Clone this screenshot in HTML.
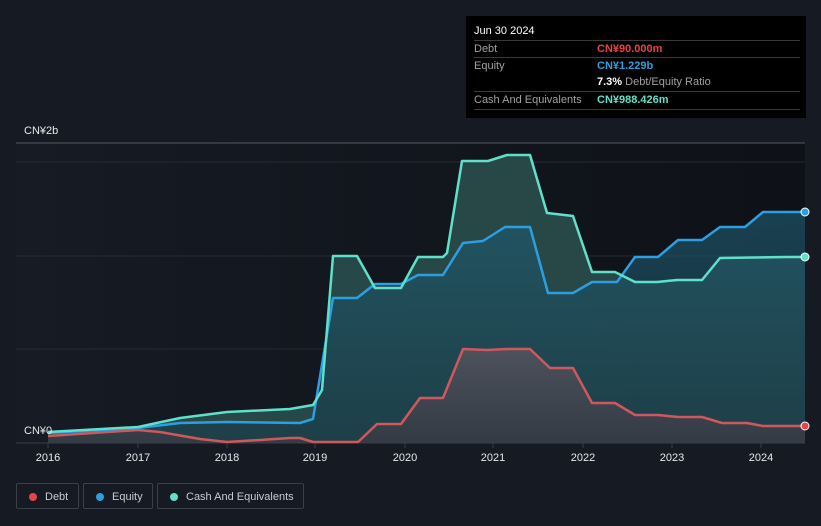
<!DOCTYPE html>
<html><head><meta charset="utf-8"><style>
body{margin:0;width:821px;height:526px;background:#151a23;font-family:"Liberation Sans","Noto Sans CJK SC",sans-serif;overflow:hidden;position:relative;color:#fff}
.tip{position:absolute;left:466px;top:16px;width:340px;height:102px;background:#000;font-size:11px}
.tip .r{position:absolute;left:8px;width:326px;border-top:1px solid #3a3a3a;height:17px;line-height:17px;color:#a0a0a0}
.tip .r span{position:absolute;left:123px}
.leg{position:absolute;top:483px;height:26px;border:1px solid #3a4049;border-radius:2px;font-size:11px;color:#c8ccd2;line-height:26px;box-sizing:border-box}
.leg i{position:absolute;left:12px;top:9px;width:8px;height:8px;border-radius:50%}
.lbl{position:absolute;font-size:11px;color:#e8e8e8}
</style></head><body>
<svg width="821" height="526" style="position:absolute;left:0;top:0">
<defs><linearGradient id="bg" x1="0" x2="1" y1="0" y2="0"><stop offset="0" stop-color="#161b24"/><stop offset="1" stop-color="#0e1117"/></linearGradient>
<linearGradient id="dg" x1="0" x2="0" y1="0" y2="1"><stop offset="0" stop-color="#52535d"/><stop offset="1" stop-color="#353a44"/></linearGradient>
<linearGradient id="eg" x1="0" x2="0" y1="0" y2="1"><stop offset="0" stop-color="#1f5a70"/><stop offset="1" stop-color="#183a48"/></linearGradient></defs>
<rect x="16" y="143" width="789" height="300" fill="url(#bg)"/>
<line x1="16" y1="143" x2="805" y2="143" stroke="#555a62"/>
<g stroke="#262b33"><line x1="16" y1="162" x2="805" y2="162"/><line x1="16" y1="256" x2="805" y2="256"/><line x1="16" y1="349" x2="805" y2="349"/></g>
<path d="M48,432 L138,427 L180,418 L227,412 L290,409 L313,405 L322,390 L333,256 L357,256 L375,288 L401,288 L418,257 L443,257 L447,253 L462,161 L488,161 L507,155 L530,155 L547,213 L573,216 L592,272 L615,272 L635,282 L657,282 L677,280 L702,280 L720,258 L787,257 L805,257 L805,443 L48,443Z" fill="#2a4e4c" opacity="0.9"/>
<path d="M48,433 L138,428 L180,423 L227,422 L300,423 L313,419 L333,298 L357,298 L375,284 L401,284 L418,275 L443,275 L463,243 L483,241 L505,227 L530,227 L548,293 L573,293 L592,282 L617,282 L635,257 L658,257 L678,240 L702,240 L720,227 L745,227 L763,212 L805,212 L805,443 L48,443Z" fill="url(#eg)" opacity="0.65"/>
<path d="M48,436 L138,430 L160,432 L200,439 L227,442 L260,440 L290,438 L300,438 L313,442 L358,442 L377,424 L401,424 L420,398 L443,398 L463,349 L487,350 L507,349 L530,349 L550,368 L573,368 L592,403 L615,403 L635,415 L658,415 L678,417 L702,417 L722,423 L747,423 L763,426 L805,426 L805,443 L48,443Z" fill="url(#dg)" opacity="0.9"/>
<line x1="16" y1="443" x2="805" y2="443" stroke="#3a3f47"/>
<g stroke-width="2.5" fill="none" stroke-linejoin="round">
<path d="M48,436 L138,430 L160,432 L200,439 L227,442 L260,440 L290,438 L300,438 L313,442 L358,442 L377,424 L401,424 L420,398 L443,398 L463,349 L487,350 L507,349 L530,349 L550,368 L573,368 L592,403 L615,403 L635,415 L658,415 L678,417 L702,417 L722,423 L747,423 L763,426 L805,426" stroke="#d0575d"/>
<path d="M48,433 L138,428 L180,423 L227,422 L300,423 L313,419 L333,298 L357,298 L375,284 L401,284 L418,275 L443,275 L463,243 L483,241 L505,227 L530,227 L548,293 L573,293 L592,282 L617,282 L635,257 L658,257 L678,240 L702,240 L720,227 L745,227 L763,212 L805,212" stroke="#2d9ee0"/>
<path d="M48,432 L138,427 L180,418 L227,412 L290,409 L313,405 L322,390 L333,256 L357,256 L375,288 L401,288 L418,257 L443,257 L447,253 L462,161 L488,161 L507,155 L530,155 L547,213 L573,216 L592,272 L615,272 L635,282 L657,282 L677,280 L702,280 L720,258 L787,257 L805,257" stroke="#5ee0cb"/>
</g>
<circle cx="805" cy="426" r="4" fill="#e8434a" stroke="#fff" stroke-width="1"/>
<circle cx="805" cy="212" r="4" fill="#2d9ee0" stroke="#fff" stroke-width="1"/>
<circle cx="805" cy="257" r="4" fill="#5ee0cb" stroke="#fff" stroke-width="1"/>
<g stroke="#3a3f47"><line x1="48" y1="443" x2="48" y2="448"/><line x1="138" y1="443" x2="138" y2="448"/><line x1="227" y1="443" x2="227" y2="448"/><line x1="315" y1="443" x2="315" y2="448"/><line x1="405" y1="443" x2="405" y2="448"/><line x1="493" y1="443" x2="493" y2="448"/><line x1="583" y1="443" x2="583" y2="448"/><line x1="672" y1="443" x2="672" y2="448"/><line x1="761" y1="443" x2="761" y2="448"/></g>
<g font-size="11" fill="#e8e8e8" text-anchor="middle" font-family="Liberation Sans,sans-serif"><text x="48" y="461">2016</text><text x="138" y="461">2017</text><text x="227" y="461">2018</text><text x="315" y="461">2019</text><text x="405" y="461">2020</text><text x="493" y="461">2021</text><text x="583" y="461">2022</text><text x="672" y="461">2023</text><text x="761" y="461">2024</text></g>
</svg>
<div class="lbl" style="left:24px;top:125px">CN¥2b</div>
<div class="lbl" style="left:24px;top:425px">CN¥0</div>
<div class="tip">
<div style="position:absolute;left:8px;top:9px;font-size:11px;color:#fff">Jun 30 2024</div>
<div class="r" style="top:24px">Debt<span style="color:#e8434a;font-weight:bold">CN¥90.000m</span></div>
<div class="r" style="top:41px">Equity<span style="color:#2d9ee0;font-weight:bold">CN¥1.229b</span></div>
<div class="r" style="top:58px;border-top:none"><span><b style="color:#fff">7.3%</b> Debt/Equity Ratio</span></div>
<div class="r" style="top:75px;border-bottom:1px solid #3a3a3a">Cash And Equivalents<span style="color:#5ee0cb;font-weight:bold">CN¥988.426m</span></div>
</div>
<div class="leg" style="left:16px;width:63px"><i style="background:#e8434a"></i><span style="position:absolute;left:28px">Debt</span></div>
<div class="leg" style="left:83px;width:70px"><i style="background:#2d9ee0"></i><span style="position:absolute;left:28px">Equity</span></div>
<div class="leg" style="left:157px;width:147px"><i style="background:#5ee0cb"></i><span style="position:absolute;left:28px">Cash And Equivalents</span></div>
</body></html>
